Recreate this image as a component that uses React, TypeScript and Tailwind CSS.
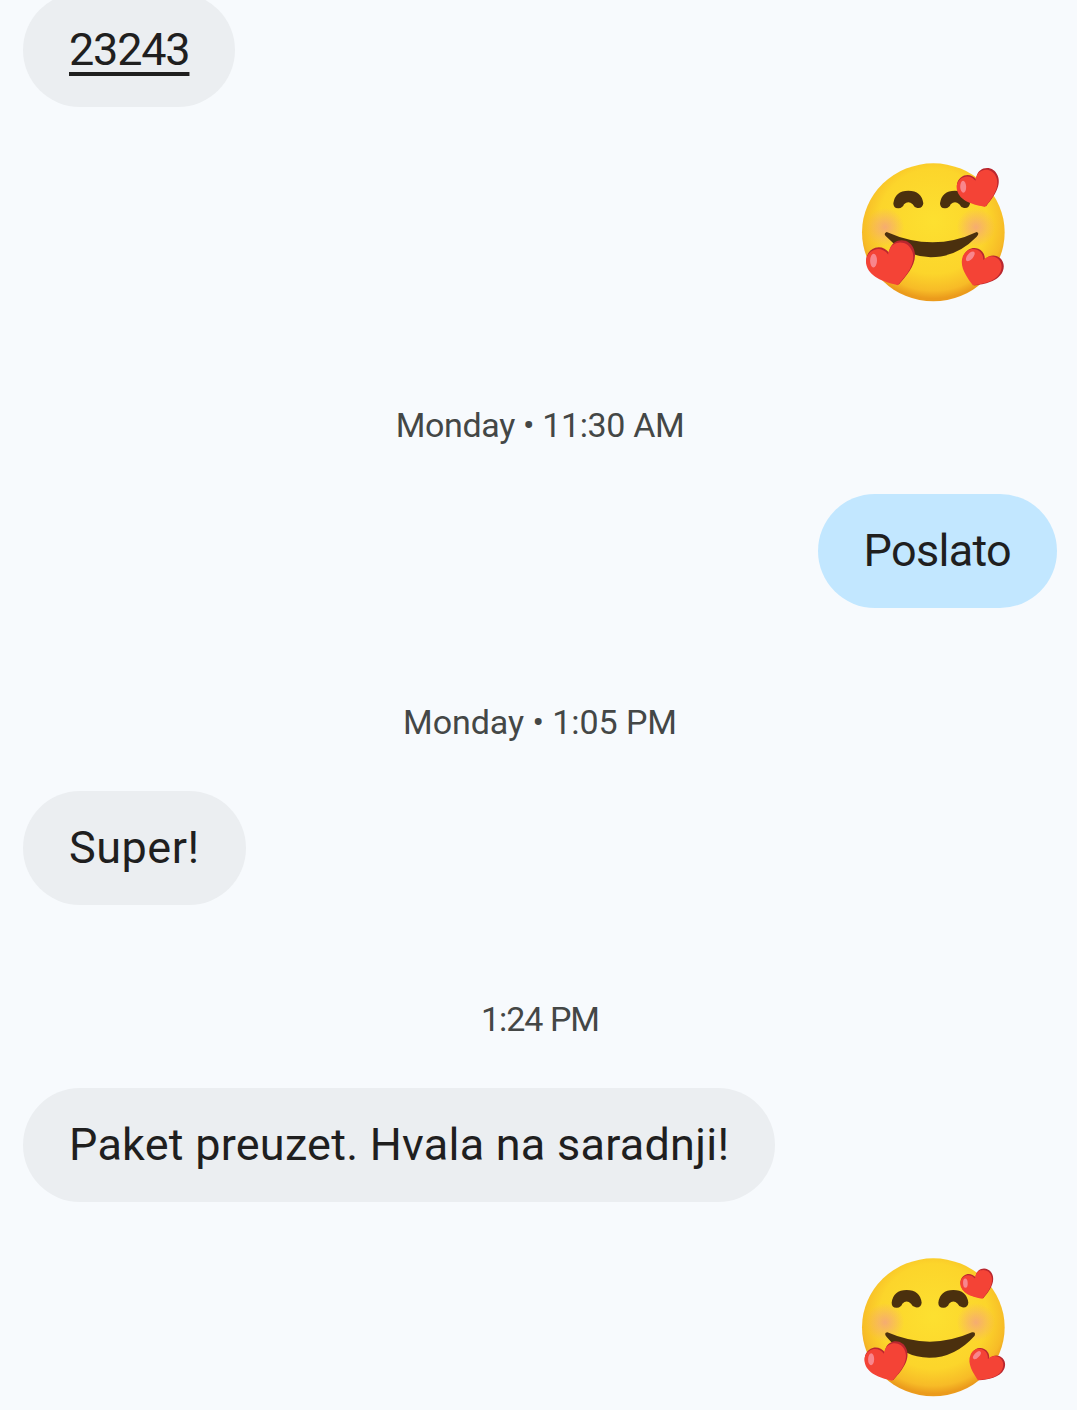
type HeartProps = { x: number; y: number; rotate: number; scale: number };

const heartPath =
  "M0 42 C-20 30 -50 12 -50 -15 C-50 -33 -37 -43 -24 -43 C-13 -43 -4 -36 0 -25 C4 -36 13 -43 24 -43 C37 -43 50 -33 50 -15 C50 12 20 30 0 42Z";

const eyePath =
  "M160 160 Q165 122 205 122 Q245 122 250 160 Q248 176 232 174 Q222 172 218 163 Q205 150 192 163 Q188 174 176 175 Q160 176 160 160Z";

function Heart({ x, y, rotate, scale }: HeartProps) {
  return (
    <g transform={`translate(${x} ${y}) rotate(${rotate}) scale(${scale})`}>
      <path d={heartPath} fill="#b9272f" transform="translate(2 -1)" />
      <path d={heartPath} fill="#f44336" transform="translate(-1 1) scale(0.97)" />
      <ellipse cx="-33" cy="-20" rx="7" ry="14" fill="#f8868d" transform="rotate(18 -33 -20)" />
    </g>
  );
}

function Emoji({ id, hearts, eyes, mouth }: { id: string; hearts: HeartProps[]; eyes: string[]; mouth: string }) {
  return (
    <svg width="180" height="165" viewBox="0 0 540 495" className="block">
      <defs>
        <radialGradient id={`${id}-face`} cx="50%" cy="42%" r="56%">
          <stop offset="0%" stopColor="#fde030" />
          <stop offset="68%" stopColor="#fcd52b" />
          <stop offset="90%" stopColor="#f7bb27" />
          <stop offset="100%" stopColor="#eb9b1c" />
        </radialGradient>
        <radialGradient id={`${id}-blush`}>
          <stop offset="0%" stopColor="#f39a8e" stopOpacity="0.7" />
          <stop offset="100%" stopColor="#f39a8e" stopOpacity="0" />
        </radialGradient>
      </defs>
      <ellipse cx="280" cy="247" rx="214" ry="207" fill={`url(#${id}-face)`} />
      <circle cx="135" cy="232" r="58" fill={`url(#${id}-blush)`} />
      <circle cx="408" cy="232" r="58" fill={`url(#${id}-blush)`} />
      {eyes.map((t) => (
        <path key={t} d={eyePath} fill="#4b300e" transform={t} />
      ))}
      <path d={mouth} fill="#4b300e" />
      {hearts.map((h, i) => (
        <Heart key={i} {...h} />
      ))}
    </svg>
  );
}

function Bubble({ children, sent, className }: { children: React.ReactNode; sent?: boolean; className?: string }) {
  return (
    <div
      className={`h-[114px] flex items-center rounded-full px-[46px] text-[45px] text-[#1f1f1f] ${
        sent ? "bg-[#c2e7ff] self-end mr-5" : "bg-[#ebeef1] self-start ml-[23px]"
      } ${className ?? ""}`}
    >
      {children}
    </div>
  );
}

function Time({ children, className }: { children: React.ReactNode; className?: string }) {
  return <div className={`h-10 pl-[3px] leading-10 text-center text-[34px] text-[#444746] ${className ?? ""}`}>{children}</div>;
}

export default function App() {
  return (
    <div className="w-[1077px] h-[1410px] overflow-hidden bg-[#f7fafd] flex flex-col font-['Roboto',sans-serif]">
      <div className="-mt-[7px] flex flex-col">
        <Bubble className="tracking-[-1.2px]">
          <span className="underline decoration-[4px] underline-offset-[7px]">23243</span>
        </Bubble>
      </div>
      <div className="mt-[43px] self-end mr-[57px]">
        <Emoji
          id="a"
          eyes={["translate(0 0)", "translate(140 0)"]}
          mouth="M140 246 Q280 308 410 246 Q420 250 410 260 Q350 322 272 322 Q195 320 137 258 Q130 250 140 246Z"
          hearts={[
            { x: 156, y: 346, rotate: -17, scale: 1.48 },
            { x: 418, y: 120, rotate: -20, scale: 1.28 },
            { x: 420, y: 358, rotate: 22, scale: 1.26 },
          ]}
        />
      </div>
      <div className="mt-[90px]">
        <Time className="tracking-[-0.35px]">Monday • 11:30 AM</Time>
      </div>
      <div className="mt-[49px] flex flex-col">
        <Bubble sent className="tracking-[-0.7px]">Poslato</Bubble>
      </div>
      <div className="mt-[94px]">
        <Time className="tracking-[-0.06px]">Monday • 1:05 PM</Time>
      </div>
      <div className="mt-[49px] flex flex-col">
        <Bubble className="tracking-[0.5px]">Super!</Bubble>
      </div>
      <div className="mt-[94px]">
        <Time className="tracking-[-1px]">1:24 PM</Time>
      </div>
      <div className="mt-[49px] flex flex-col">
        <Bubble className="tracking-[0.24px]">Paket preuzet. Hvala na saradnji!</Bubble>
      </div>
      <div className="mt-[43px] self-end mr-[57px]">
        <Emoji
          id="b"
          eyes={["translate(-5 13)", "translate(135 13)"]}
          mouth="M142 262 Q270 318 396 262 Q408 260 404 272 Q345 338 268 338 Q190 337 140 276 Q130 264 142 262Z"
          hearts={[
            { x: 142, y: 355, rotate: -17, scale: 1.3 },
            { x: 414, y: 122, rotate: -20, scale: 1.0 },
            { x: 434, y: 365, rotate: 25, scale: 1.08 },
          ]}
        />
      </div>
    </div>
  );
}
